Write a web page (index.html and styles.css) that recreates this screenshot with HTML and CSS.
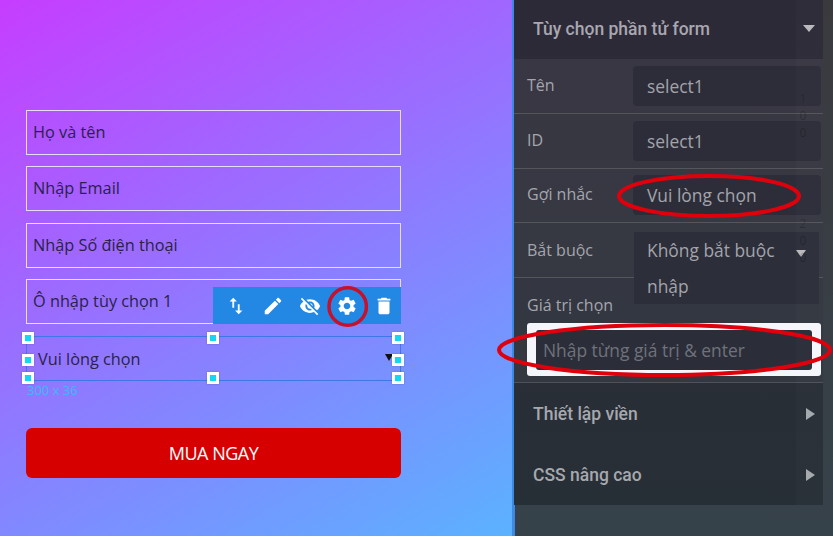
FILE: index.html
```html
<!DOCTYPE html>
<html lang="vi">
<head>
<meta charset="utf-8">
<title>Form</title>
<link rel="stylesheet" href="styles.css">
</head>
<body>
<main class="page">
  <section class="canvas">
    <form class="form">
      <div class="field">Họ và tên</div>
      <div class="field">Nhập Email</div>
      <div class="field">Nhập Số điện thoại</div>
      <div class="field">Ô nhập tùy chọn 1</div>
      <div class="selected">
        <span class="selected-text">Vui lòng chọn</span>
        <i class="selected-caret"></i>
        <i class="handle h-tl"></i><i class="handle h-tc"></i><i class="handle h-tr"></i>
        <i class="handle h-ml"></i><i class="handle h-mr"></i>
        <i class="handle h-bl"></i><i class="handle h-bc"></i><i class="handle h-br"></i>
        <span class="size">300 x 36</span>
        <div class="toolbar">
          <svg class="tool tool-swap" viewBox="0 0 24 24"><path d="M9 3L5 6.99h3V14h2V6.99h3L9 3zm7 14.01V10h-2v7.01h-3L15 21l4-3.99h-3z"/></svg>
          <svg class="tool" viewBox="0 0 24 24"><path d="M3 17.25V21h3.75L17.81 9.94l-3.75-3.75L3 17.25zM20.71 7.04c.39-.39.39-1.02 0-1.41l-2.34-2.34c-.39-.39-1.02-.39-1.41 0l-1.83 1.83 3.75 3.75 1.83-1.83z"/></svg>
          <svg class="tool" viewBox="0 0 24 24"><path d="M12 7c2.76 0 5 2.24 5 5 0 .65-.13 1.26-.36 1.83l2.92 2.92c1.51-1.26 2.7-2.89 3.43-4.75-1.73-4.39-6-7.5-11-7.5-1.4 0-2.74.25-3.98.7l2.16 2.16C10.74 7.13 11.35 7 12 7zM2 4.27l2.28 2.28.46.46C3.08 8.3 1.78 10.02 1 12c1.73 4.39 6 7.5 11 7.5 1.55 0 3.03-.3 4.38-.84l.42.42L19.73 22 21 20.73 3.27 3 2 4.27zM7.53 9.8l1.55 1.55c-.05.21-.08.43-.08.65 0 1.66 1.34 3 3 3 .22 0 .44-.03.65-.08l1.55 1.55c-.67.33-1.41.53-2.2.53-2.76 0-5-2.24-5-5 0-.79.2-1.53.53-2.2zm4.31-.78l3.15 3.15.02-.16c0-1.66-1.34-3-3-3l-.17.01z"/></svg>
          <svg class="tool" viewBox="0 0 24 24"><path d="M19.14 12.94c.04-.3.06-.61.06-.94 0-.32-.02-.64-.07-.94l2.03-1.58c.18-.14.23-.41.12-.61l-1.92-3.32c-.12-.22-.37-.29-.59-.22l-2.39.96c-.5-.38-1.03-.7-1.62-.94l-.36-2.54c-.04-.24-.24-.41-.48-.41h-3.84c-.24 0-.43.17-.47.41l-.36 2.54c-.59.24-1.13.57-1.62.94l-2.39-.96c-.22-.08-.47 0-.59.22L2.74 8.87c-.12.21-.08.47.12.61l2.03 1.58c-.05.3-.09.63-.09.94s.02.64.07.94l-2.03 1.58c-.18.14-.23.41-.12.61l1.92 3.32c.12.22.37.29.59.22l2.39-.96c.5.38 1.03.7 1.62.94l.36 2.54c.05.24.24.41.48.41h3.84c.24 0 .44-.17.47-.41l.36-2.54c.59-.24 1.13-.56 1.62-.94l2.39.96c.22.08.47 0 .59-.22l1.92-3.32c.12-.22.07-.47-.12-.61l-2.01-1.58zM12 15.6c-1.98 0-3.6-1.62-3.6-3.6s1.62-3.6 3.6-3.6 3.6 1.62 3.6 3.6-1.62 3.6-3.6 3.6z"/></svg>
          <svg class="tool" viewBox="0 0 24 24"><path d="M6 19c0 1.1.9 2 2 2h8c1.1 0 2-.9 2-2V7H6v12zM19 4h-3.5l-1-1h-5l-1 1H5v2h14V4z"/></svg>
        </div>
      </div>
      <div class="buy">MUA NGAY</div>
    </form>
  </section>

  <aside class="panel">
    <div class="panel-box">
      <header class="head head-open">
        <span>Tùy chọn phần tử form</span>
        <i class="tri-down"></i>
      </header>
      <div class="row"><label class="label">Tên</label><div class="value">select1</div></div>
      <div class="row"><label class="label">ID</label><div class="value">select1</div></div>
      <div class="row"><label class="label">Gợi nhắc</label><div class="value">Vui lòng chọn</div></div>
      <div class="row row-select">
        <label class="label">Bắt buộc</label>
        <div class="value value-select">Không bắt buộc nhập<i class="tri-down tri-select"></i></div>
      </div>
      <div class="values">
        <label class="label">Giá trị chọn</label>
        <div class="tag-box"><div class="tag-input">Nhập từng giá trị &amp; enter</div></div>
      </div>
      <header class="head head-first"><span>Thiết lập viền</span><i class="tri-right"></i></header>
      <header class="head"><span>CSS nâng cao</span><i class="tri-right"></i></header>
    </div>
    <div class="ruler-band"></div>
    <div class="ruler ruler-a">1<br>0<br>0</div>
    <div class="ruler ruler-b">2<br>0<br>0</div>
  </aside>

  <svg class="marks" viewBox="0 0 833 536">
    <circle class="mark-gear" cx="347.700" cy="306.500" r="18.700"/>
    <ellipse cx="709" cy="196" rx="90" ry="20"/>
    <ellipse cx="664.500" cy="350" rx="165.500" ry="25"/>
  </svg>
</main>
</body>
</html>
```
FILE: styles.css
```css
* { box-sizing: border-box; }
html, body { margin: 0; padding: 0; }
body { width: 833px; height: 536px; overflow: hidden; font-family: "Open Sans", sans-serif; }

.page { position: relative; display: flex; width: 833px; height: 536px; }

.canvas {
  width: 512px;
  height: 536px;
  flex: none;
  background: linear-gradient(150deg, #c63dff 0%, #5bb2ff 100%);
}
.form { display: flex; flex-direction: column; padding: 110px 0 0 26px; width: 401px; }
.field {
  height: 45px;
  margin-bottom: 11.450px;
  padding-left: 6px;
  border: 1px solid #e6dcff;
  color: #2a2248;
  font-size: 16.300px;
  line-height: 42.600px;
}
.selected {
  position: relative;
  height: 45px;
  margin-top: .3px;
  padding-left: 11px;
  border: 1px solid #3f78e6;
  color: #2a2248;
  font-size: 16.300px;
  line-height: 45px;
}
.selected-caret {
  position: absolute;
  left: 358px;
  top: 17px;
  border-left: 4px solid transparent;
  border-right: 4px solid transparent;
  border-top: 7px solid #111;
}
.handle {
  position: absolute;
  width: 12px;
  height: 12px;
  background: #14d8f0;
  border: 3px solid #fff;
  box-shadow: 0 0 2px rgba(0, 0, 0, .2);
}
.h-tl { left: -5px; top: -5px; }
.h-tc { left: 180px; top: -5px; }
.h-tr { left: 365px; top: -5px; }
.h-ml { left: -5px; top: 17px; }
.h-mr { left: 365px; top: 17px; }
.h-bl { left: -5px; top: 35px; }
.h-bc { left: 180px; top: 35px; }
.h-br { left: 365px; top: 35px; }
.size { position: absolute; left: 0; top: 44px; color: #3fb8ff; font-size: 13px; line-height: 18px; }
.toolbar {
  position: absolute;
  right: -1px;
  top: -50px;
  display: flex;
  align-items: center;
  width: 188px;
  height: 37px;
  padding-left: 12px;
  gap: 15px;
  background: #2388e4;
}
.tool { width: 22px; height: 22px; fill: #fff; flex: none; }
.buy {
  height: 50px;
  margin-top: 47px;
  background: #d60000;
  border-radius: 6px;
  color: #fff;
  font-size: 18px;
  font-weight: 500;
  letter-spacing: -.5px;
  line-height: 50px;
  text-align: center;
}

.panel {
  position: relative;
  flex: 1;
  height: 536px;
  background: linear-gradient(180deg, #3a3a3e 0%, #36424a 100%);
  border-left: 3px solid #3c8ae4;
}
.panel-box {
  position: relative;
  width: 309px;
  height: 505px;
  margin-left: -1px;
  background: linear-gradient(180deg, #2d2a38 0%, #272f36 100%);
}
.head {
  display: flex;
  align-items: center;
  justify-content: space-between;
  height: 61px;
  padding: 0 8px 0 19px;
  color: #a6a8ae;
  font-family: Roboto, sans-serif;
  font-size: 17.500px;
  font-weight: 500;
}
.head-open { height: 59px; color: #a9a7b0; }
.head-open span { margin-top: -2px; }
.head-first { height: 62px; }
.tri-down { width: 0; height: 0; border-left: 6px solid transparent; border-right: 6px solid transparent; border-top: 7px solid #b8b8bd; }
.head-open .tri-down { margin-top: -2px; }
.tri-right { width: 0; height: 0; border-top: 6px solid transparent; border-bottom: 6px solid transparent; border-left: 9px solid #a4a9ae; }
.row {
  display: flex;
  align-items: center;
  height: 54.800px;
  padding-left: 13px;
  background: rgba(255, 255, 255, .06);
  border-bottom: 1px solid #55555c;
}
.row-select { position: relative; align-items: flex-start; padding-top: 9px; }
.label { display: block; width: 106px; flex: none; margin-top: -2px; color: #a5a6ad; font-size: 16px; line-height: 20px; }
.row-select .label { margin-top: 8px; }
.value {
  width: 188px;
  height: 40px;
  padding-left: 14px;
  border-radius: 4px;
  background: #2d2d39;
  color: #a3a4ab;
  font-size: 17.400px;
  line-height: 40px;
}
.value-select {
  position: relative;
  width: 185px;
  height: 72px;
  margin-left: 1px;
  padding-left: 13px;
  padding-right: 30px;
  border-radius: 0;
  line-height: 36px;
  background: #2c2e39;
}
.tri-select { position: absolute; left: 162px; top: 18px; border-left-width: 5.500px; border-right-width: 5.500px; }
.values {
  height: 104.600px;
  padding: 17px 12px 0 13px;
  background: rgba(255, 255, 255, .05);
  border-bottom: 1px solid #4f5258;
}
.values .label { width: auto; margin-top: 0; }
.tag-box {
  width: 294px;
  height: 53px;
  margin-top: 8px;
  padding: 7px 8px;
  border-radius: 3px;
  background: #f4f6fc;
}
.tag-input {
  width: 276px;
  height: 40px;
  margin-left: 1px;
  padding-left: 7px;
  border-radius: 3px;
  background: #2b2e38;
  color: #6f727c;
  font-size: 17.400px;
  line-height: 40px;
}
.ruler-band { position: absolute; left: 281px; top: 0; width: 27px; height: 505px; background: rgba(255, 255, 255, .015); }
.ruler {
  position: absolute;
  left: 283px;
  width: 10px;
  color: rgba(0, 0, 0, .22);
  font-size: 12px;
  line-height: 17px;
  text-align: center;
}
.ruler-a { top: 90px; }
.ruler-b { top: 215px; }

.marks { position: absolute; left: 0; top: 0; width: 833px; height: 536px; fill: none; stroke: #e0000c; stroke-width: 4; pointer-events: none; }
.mark-gear { stroke: #c8102a; stroke-width: 3.500; }
```
